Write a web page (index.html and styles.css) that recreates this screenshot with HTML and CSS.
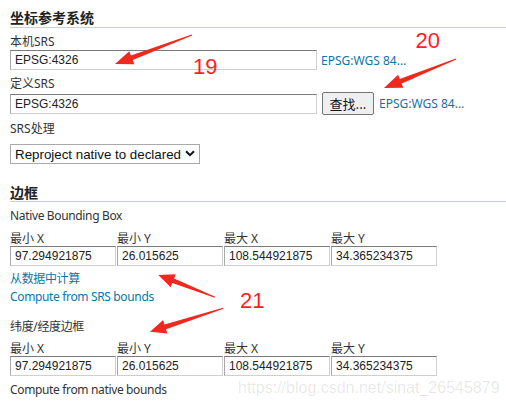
FILE: index.html
```html
<!DOCTYPE html>
<html lang="zh-CN">
  <head>
    <meta charset="UTF-8" />
    <title>坐标参考系统</title>
    <link rel="stylesheet" href="styles.css">
  </head>
  <body>
    <div class="page">
      <h3 class="section-title">坐标参考系统</h3>

      <div class="field">
        <label for="nativeSrs">本机SRS</label>
        <div class="srs-row">
          <input id="nativeSrs" class="srs-input" type="text" value="EPSG:4326" />
          <a href="#" class="srs-link">EPSG:WGS 84...</a>
        </div>
      </div>

      <div class="field">
        <label for="declaredSrs">定义SRS</label>
        <div class="srs-row">
          <input id="declaredSrs" class="srs-input" type="text" value="EPSG:4326" />
          <button class="find-button" type="button">查找...</button>
          <a href="#" class="srs-link">EPSG:WGS 84...</a>
        </div>
      </div>

      <div class="field">
        <label for="srsHandling">SRS处理</label>
        <span class="select-wrap">
          <select id="srsHandling" class="srs-select">
            <option>Reproject native to declared</option>
            <option>Force declared</option>
            <option>Keep native</option>
          </select>
          <svg class="chevron" width="10" height="7" viewBox="0 0 10 7">
            <path d="M1 1.2 L5 5.2 L9 1.2" />
          </svg>
        </span>
      </div>

      <h3 class="section-title bbox-title">边框</h3>

      <div class="field">
        <span class="field-label">Native Bounding Box</span>
        <div class="bbox">
          <span class="bbox-label">最小 X</span>
          <span class="bbox-label">最小 Y</span>
          <span class="bbox-label">最大 X</span>
          <span class="bbox-label">最大 Y</span>
          <input class="bbox-input" type="text" value="97.294921875" />
          <input class="bbox-input" type="text" value="26.015625" />
          <input class="bbox-input" type="text" value="108.544921875" />
          <input class="bbox-input" type="text" value="34.365234375" />
        </div>
        <a href="#" class="action-link">从数据中计算</a>
        <a href="#" class="action-link">Compute from SRS bounds</a>
      </div>

      <div class="field latlon">
        <span class="field-label">纬度/经度边框</span>
        <div class="bbox">
          <span class="bbox-label">最小 X</span>
          <span class="bbox-label">最小 Y</span>
          <span class="bbox-label">最大 X</span>
          <span class="bbox-label">最大 Y</span>
          <input class="bbox-input" type="text" value="97.294921875" />
          <input class="bbox-input" type="text" value="26.015625" />
          <input class="bbox-input" type="text" value="108.544921875" />
          <input class="bbox-input" type="text" value="34.365234375" />
        </div>
        <span class="action-text">Compute from native bounds</span>
      </div>
    </div>

    <!-- annotations drawn over the screenshot -->
    <svg class="marks" width="506" height="407" viewBox="0 0 506 407">
      <polygon points="192.2,35.5 132.7,60 134.3,64.2 115,64 129.3,51.2 130.9,55.4 191.8,34.5" />
      <polygon points="456.2,59.5 401.6,83.6 403.3,87.8 384,88 398.1,74.8 399.8,79 455.8,58.5" />
      <polygon points="215.2,296.8 174.1,278.5 175.7,274.3 158.3,275 170.7,287.3 172.3,283.1 214.8,297.8" />
      <polygon points="223.5,308.8 166,329.2 167.3,333.5 150,331.7 163.1,320.1 164.4,324.4 223.1,307.8" />
      <text x="193" y="74">19</text>
      <text x="415.5" y="48.3">20</text>
      <text x="240" y="308.3">21</text>
    </svg>

    <div class="watermark">https://blog.csdn.net/sinat_26545879</div>
  </body>
</html>
```

FILE: styles.css
```css
body {
  margin: 0;
  font-family: "Noto Sans", "Noto Sans CJK SC", sans-serif;
  font-size: 12px;
  color: #333;
  background: #fff;
  position: relative;
  width: 506px;
  height: 407px;
  overflow: hidden;
}

.page {
  padding-left: 10px;
}

.section-title {
  margin: 9px 0 0;
  font-size: 14px;
  line-height: 18px;
  font-weight: bold;
  color: #222;
  border-bottom: 1px solid #c9dca0;
}

.bbox-title {
  margin-top: 21px;
  line-height: 16px;
}

.field {
  margin-top: 6px;
}

.field label,
.field-label {
  display: block;
  line-height: 15px;
  margin-bottom: 1px;
}

.field-label,
.action-link,
.action-text {
  letter-spacing: -0.35px;
}

.srs-row {
  display: flex;
  align-items: center;
  gap: 4px;
}

.srs-input,
.bbox-input {
  box-sizing: border-box;
  height: 20px;
  margin: 0;
  padding: 0 4px;
  font-family: "Liberation Sans", Arial, sans-serif;
  font-size: 12px;
  color: #222;
  background: #fff;
  border: 1px solid #cfcfcf;
  border-top-color: #7a7a7a;
  border-left-color: #a8a8a8;
  border-radius: 0;
}

.srs-input {
  width: 307px;
}

.srs-link,
.action-link {
  color: #0b76a8;
  text-decoration: none;
}

.find-button {
  box-sizing: border-box;
  height: 23px;
  width: 52px;
  margin: 0 1px;
  padding: 0;
  font-family: "Noto Sans CJK SC", sans-serif;
  font-size: 13px;
  color: #111;
  background: #efefef;
  border: 1px solid #767676;
  border-radius: 2px;
}

.select-wrap {
  position: relative;
  display: inline-block;
  margin-top: 7px;
}

.srs-select {
  display: block;
  box-sizing: border-box;
  width: 190px;
  height: 20px;
  margin: 0;
  padding: 0 0 0 4px;
  appearance: none;
  -webkit-appearance: none;
  font-family: "Liberation Sans", Arial, sans-serif;
  font-size: 13.33px;
  color: #111;
  background: #fff;
  border: 1px solid #a9a9a9;
  border-radius: 0;
}

.chevron {
  position: absolute;
  right: 5px;
  top: 6px;
  pointer-events: none;
}

.chevron path {
  fill: none;
  stroke: #111;
  stroke-width: 2;
}

.bbox {
  display: grid;
  grid-template-columns: repeat(4, 106px);
  column-gap: 1px;
  margin-top: 8px;
}

.bbox-label {
  line-height: 15px;
}

.bbox-input {
  width: 106px;
}

.action-link,
.action-text {
  display: block;
  line-height: 18px;
}

.bbox + .action-link {
  margin-top: 4px;
}

.latlon {
  margin-top: 13px;
}

.latlon .bbox {
  margin-top: 7px;
}

.latlon .action-text {
  margin-top: 5px;
}

.marks {
  position: absolute;
  top: 0;
  left: 0;
  pointer-events: none;
}

.marks polygon {
  fill: #f0281e;
}

.marks text {
  font-family: "Liberation Sans", Arial, sans-serif;
  font-size: 22px;
  fill: #ff1f1f;
}

.watermark {
  position: absolute;
  left: 238px;
  top: 379px;
  font-family: "Liberation Sans", Arial, sans-serif;
  font-size: 16px;
  color: rgba(0, 0, 0, 0.1);
  pointer-events: none;
}
```
